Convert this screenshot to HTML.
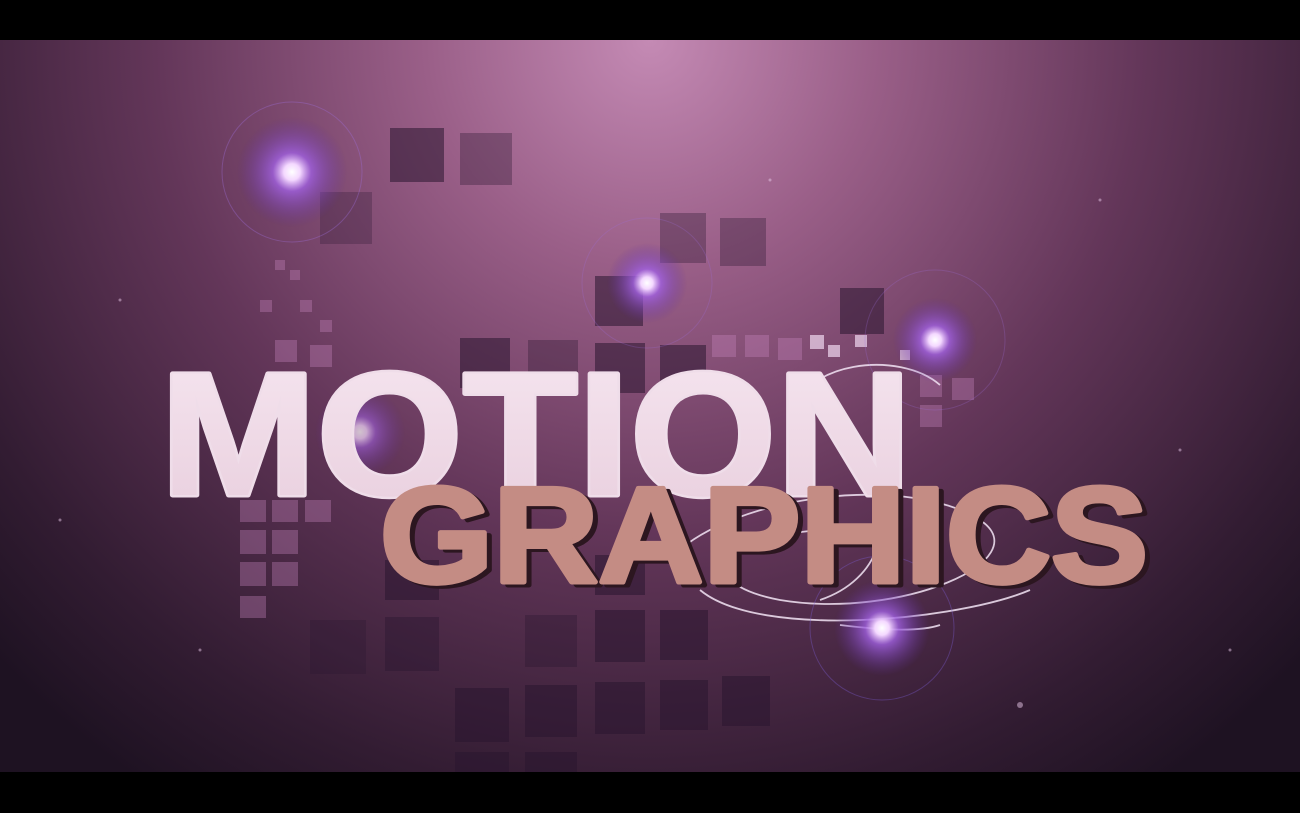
<!DOCTYPE html>
<html><head><style>
html,body{margin:0;padding:0;background:#000;width:1300px;height:813px;overflow:hidden}
</style></head><body>
<svg width="1300" height="813" viewBox="0 0 1300 813" xmlns="http://www.w3.org/2000/svg">
<defs>
<radialGradient id="bg" cx="650" cy="40" r="900" gradientUnits="userSpaceOnUse">
<stop offset="0" stop-color="#c48ab4"/>
<stop offset="0.25" stop-color="#9a5f88"/>
<stop offset="0.55" stop-color="#633659"/>
<stop offset="0.85" stop-color="#321c32"/>
<stop offset="1" stop-color="#1e1222"/>
</radialGradient>
<radialGradient id="glow">
<stop offset="0" stop-color="#fff"/>
<stop offset="0.15" stop-color="#f4d8ff"/>
<stop offset="0.35" stop-color="#a060e0" stop-opacity="0.8"/>
<stop offset="1" stop-color="#6030a0" stop-opacity="0"/>
</radialGradient>
<linearGradient id="mo" x1="0" y1="0" x2="0" y2="1">
<stop offset="0" stop-color="#f6e6f0"/><stop offset="1" stop-color="#e8cedd"/>
</linearGradient>
</defs>
<rect x="0" y="40" width="1300" height="732" fill="url(#bg)"/>
<g fill="#2a1630" opacity="0.55">
<rect x="390" y="128" width="54" height="54"/><rect x="460" y="133" width="52" height="52" opacity="0.6"/>
<rect x="660" y="213" width="46" height="50" opacity="0.6"/><rect x="720" y="218" width="46" height="48" opacity="0.6"/>
<rect x="595" y="276" width="48" height="50"/><rect x="840" y="288" width="44" height="46" opacity="1.4"/>
<rect x="460" y="338" width="50" height="50"/><rect x="528" y="340" width="50" height="50" opacity="0.6"/>
<rect x="595" y="343" width="50" height="50"/><rect x="660" y="345" width="46" height="46"/>
<rect x="320" y="192" width="52" height="52" opacity="0.5"/>
<rect x="310" y="620" width="56" height="54" opacity="0.5"/><rect x="385" y="617" width="54" height="54" opacity="0.7"/>
<rect x="525" y="615" width="52" height="52" opacity="0.6"/><rect x="595" y="610" width="50" height="52" opacity="1.2"/>
<rect x="660" y="610" width="48" height="50" opacity="1.2"/>
<rect x="455" y="688" width="54" height="54"/><rect x="525" y="685" width="52" height="52"/>
<rect x="595" y="682" width="50" height="52"/><rect x="660" y="680" width="48" height="50"/>
<rect x="722" y="676" width="48" height="50"/>
<rect x="455" y="752" width="54" height="20"/><rect x="525" y="752" width="52" height="20"/>
<rect x="385" y="560" width="54" height="40"/><rect x="595" y="555" width="50" height="40"/>
</g>
<g fill="#c888c0" opacity="0.35">
<rect x="240" y="500" width="26" height="22"/><rect x="272" y="500" width="26" height="22"/><rect x="240" y="530" width="26" height="24"/>
<rect x="272" y="530" width="26" height="24"/><rect x="240" y="562" width="26" height="24"/><rect x="272" y="562" width="26" height="24"/>
<rect x="240" y="596" width="26" height="22"/><rect x="305" y="500" width="26" height="22"/>
<rect x="275" y="340" width="22" height="22"/><rect x="310" y="345" width="22" height="22"/><rect x="275" y="372" width="22" height="22"/>
<rect x="712" y="335" width="24" height="22"/><rect x="745" y="335" width="24" height="22"/><rect x="778" y="338" width="24" height="22"/>
<rect x="920" y="375" width="22" height="22"/><rect x="952" y="378" width="22" height="22"/><rect x="920" y="405" width="22" height="22"/>
<rect x="275" y="260" width="10" height="10"/><rect x="290" y="270" width="10" height="10"/><rect x="260" y="300" width="12" height="12"/>
<rect x="300" y="300" width="12" height="12"/><rect x="320" y="320" width="12" height="12"/>
</g>
<g fill="#f0d8f0" opacity="0.7">
<rect x="810" y="335" width="14" height="14"/><rect x="828" y="345" width="12" height="12"/><rect x="855" y="335" width="12" height="12"/>
<rect x="900" y="350" width="10" height="10"/>
</g>
<g fill="none" stroke="#f4e6f6" stroke-width="1.8" opacity="0.85">
<path d="M790 420 C800 360 900 350 940 385"/>
<path d="M670 560 C720 500 900 470 980 520 C1040 560 900 620 780 600 C700 585 700 540 820 530"/>
<path d="M700 590 C760 640 960 620 1030 590"/>
<path d="M840 625 C880 630 920 632 940 625"/>
<path d="M860 470 C900 520 880 580 820 600"/>
</g>
<g>
<circle cx="292" cy="172" r="70" fill="none" stroke="#a070e0" stroke-opacity="0.35"/>
<circle cx="292" cy="172" r="55" fill="url(#glow)"/>
<circle cx="647" cy="283" r="40" fill="url(#glow)"/>
<circle cx="647" cy="283" r="65" fill="none" stroke="#a070e0" stroke-opacity="0.25"/>
<circle cx="935" cy="340" r="42" fill="url(#glow)"/>
<circle cx="935" cy="340" r="70" fill="none" stroke="#a070e0" stroke-opacity="0.25"/>
<circle cx="882" cy="628" r="48" fill="url(#glow)"/>
<circle cx="882" cy="628" r="72" fill="none" stroke="#8060e0" stroke-opacity="0.35"/>
<circle cx="360" cy="432" r="45" fill="url(#glow)" opacity="0.7"/>
</g>
<g fill="#e8c8e8" opacity="0.5">
<circle cx="120" cy="300" r="1.5"/><circle cx="200" cy="650" r="1.5"/><circle cx="1100" cy="200" r="1.5"/><circle cx="1020" cy="705" r="3"/>
<circle cx="1180" cy="450" r="1.5"/><circle cx="60" cy="520" r="1.5"/><circle cx="770" cy="180" r="1.5"/><circle cx="1230" cy="650" r="1.5"/>
</g>
<text x="160" y="495" textLength="752" lengthAdjust="spacingAndGlyphs" font-family="Liberation Sans, sans-serif" font-weight="bold" font-size="176" fill="url(#mo)" stroke="#efdde9" stroke-width="5" stroke-linejoin="round" paint-order="stroke">MOTION</text>
<text x="380" y="582" textLength="768" lengthAdjust="spacingAndGlyphs" font-family="Liberation Sans, sans-serif" font-weight="bold" font-size="136" fill="#2c1620" stroke="#2c1620" stroke-width="5" stroke-linejoin="round" transform="translate(5,3)">GRAPHICS</text>
<text x="380" y="582" textLength="768" lengthAdjust="spacingAndGlyphs" font-family="Liberation Sans, sans-serif" font-weight="bold" font-size="136" fill="#c48c84" stroke="#c48c84" stroke-width="5" stroke-linejoin="round">GRAPHICS</text>
</svg>
</body></html>
